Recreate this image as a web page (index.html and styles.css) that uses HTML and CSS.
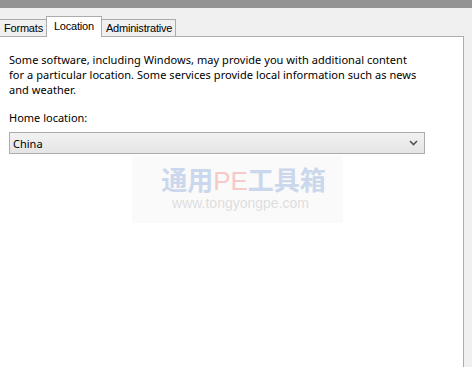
FILE: index.html
```html
<!DOCTYPE html>
<html lang="en">
<head>
  <meta charset="UTF-8">
  <title>Region - Location</title>
  <link rel="stylesheet" href="styles.css">
</head>
<body>
  <div class="titlebar"></div>

  <div class="tabs">
    <div class="tab">Formats</div>
    <div class="tab active">Location</div>
    <div class="tab">Administrative</div>
  </div>

  <div class="panel">
    <p class="intro">Some software, including Windows, may provide you with additional content<br>for a particular location. Some services provide local information such as news<br>and weather.</p>

    <div class="label">Home location:</div>
    <div class="select">
      <span>China</span>
      <svg class="chevron" width="9" height="6" viewBox="0 0 9 6">
        <path d="M1 1 L4.5 4.5 L8 1" fill="none" stroke="#555" stroke-width="1.6"/>
      </svg>
    </div>

    <!-- watermark baked into the screenshot -->
    <div class="watermark">
      <div class="wm-logo"><span class="blue">通用</span><span class="pink">PE</span><span class="blue">工具箱</span></div>
      <div class="wm-url">www.tongyongpe.com</div>
    </div>
  </div>
</body>
</html>
```

FILE: styles.css
```css
html, body {
  height: 100%;
  overflow: hidden;
}

body {
  margin: 0;
  background: #f0f0f0;
  font-family: "Noto Sans", "Open Sans", sans-serif;
  font-size: 11px;
  color: #000;
  display: flex;
  flex-direction: column;
}

.titlebar {
  height: 8px;
  background: #939393;
}

.tabs {
  height: 28px;
  display: flex;
  align-items: flex-end;
  margin-left: -1px;
  font-family: "Liberation Sans", Arial, sans-serif;
  font-size: 11px;
  letter-spacing: -0.2px;
}

.tab {
  height: 16px;
  line-height: 17px;
  padding: 0 3px 0 4px;
  border: 1px solid #acacac;
  border-bottom: none;
  background: #f0f0f0;
}

.tab + .tab {
  margin-left: -1px;
}

.tab.active {
  position: relative;
  z-index: 1;
  height: 20px;
  line-height: 18px;
  padding: 0 7px;
  background: #fff;
  margin-bottom: -1px;
}

.panel {
  flex: 1;
  width: 465px;
  margin-left: -1px;
  margin-bottom: -10px;
  background: #fff;
  border: 1px solid #adadad;
  position: relative;
  padding: 0 0 0 9px;
  box-sizing: border-box;
}

.intro {
  margin: 15px 0 0;
  line-height: 15px;
  white-space: nowrap;
  letter-spacing: 0.05px;
}

.label {
  margin-top: 13px;
  line-height: 15px;
}

.select {
  margin-top: 7px;
  width: 416px;
  height: 22px;
  box-sizing: border-box;
  border: 1px solid #acacac;
  background: linear-gradient(#f2f2f2, #e5e5e5);
  display: flex;
  align-items: center;
  justify-content: space-between;
  padding: 0 6px 0 3px;
}

.watermark {
  position: absolute;
  left: 132px;
  top: 119px;
  width: 211px;
  height: 67px;
  background: #fafafa;
  text-align: center;
}

.wm-logo {
  margin-top: 8px;
  padding-left: 12px;
  font-family: "Noto Sans CJK SC", sans-serif;
  font-size: 26px;
  font-weight: bold;
  line-height: 30px;
}

.wm-logo .blue {
  color: #cbd7ec;
}

.wm-logo .pink {
  color: #f7c9c9;
  font-family: "Liberation Sans", Arial, sans-serif;
  font-weight: normal;
}

.wm-url {
  padding-left: 6px;
  font-family: "Liberation Sans", Arial, sans-serif;
  font-size: 14px;
  color: #dedede;
  line-height: 14px;
}
```
